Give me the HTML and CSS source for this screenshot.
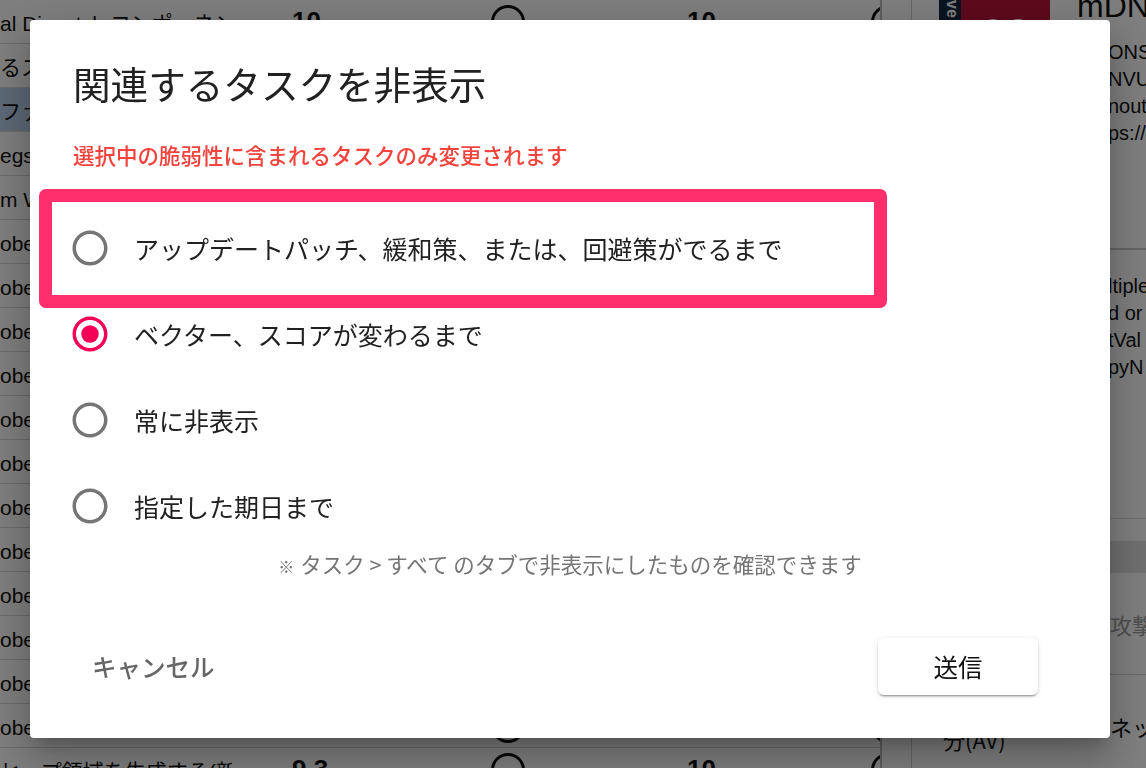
FILE: index.html
```html
<!DOCTYPE html>
<html lang="ja">
<head>
    <meta charset="UTF-8">
    <meta name="viewport" content="width=device-width, initial-scale=1.0">
    <title>関連するタスクを非表示</title>
    <link rel="stylesheet" href="styles.css">
</head>
<body>
    <div id="app">
        <div id="list">
            <div class="row"><div class="c-name">al Dispatch コンポーネントの脆弱性</div><div class="c-score">10</div><div class="c-mark"><div class="ring"></div></div><div class="c-avg">10</div><div class="c-mark"><div class="ring"></div></div></div>
            <div class="row"><div class="c-name">るスクリプト実行の脆弱性</div><div class="c-score">10</div><div class="c-mark"><div class="ring"></div></div><div class="c-avg">10</div><div class="c-mark"><div class="ring"></div></div></div>
            <div class="row selected"><div class="c-name">ファイル共有の脆弱性</div><div class="c-score">10</div><div class="c-mark"><div class="ring"></div></div><div class="c-avg">10</div><div class="c-mark"><div class="ring"></div></div></div>
            <div class="row"><div class="c-name">egsvr32 の脆弱性</div><div class="c-score">10</div><div class="c-mark"><div class="ring"></div></div><div class="c-avg">10</div><div class="c-mark"><div class="ring"></div></div></div>
            <div class="row"><div class="c-name">m Windows の脆弱性</div><div class="c-score">10</div><div class="c-mark"><div class="ring"></div></div><div class="c-avg">10</div><div class="c-mark"><div class="ring"></div></div></div>
            <div class="row"><div class="c-name">obe Reader の脆弱性</div><div class="c-score">10</div><div class="c-mark"><div class="ring"></div></div><div class="c-avg">10</div><div class="c-mark"><div class="ring"></div></div></div>
            <div class="row"><div class="c-name">obe Reader の脆弱性</div><div class="c-score">10</div><div class="c-mark"><div class="ring"></div></div><div class="c-avg">10</div><div class="c-mark"><div class="ring"></div></div></div>
            <div class="row"><div class="c-name">obe Reader の脆弱性</div><div class="c-score">10</div><div class="c-mark"><div class="ring"></div></div><div class="c-avg">10</div><div class="c-mark"><div class="ring"></div></div></div>
            <div class="row"><div class="c-name">obe Reader の脆弱性</div><div class="c-score">10</div><div class="c-mark"><div class="ring"></div></div><div class="c-avg">10</div><div class="c-mark"><div class="ring"></div></div></div>
            <div class="row"><div class="c-name">obe Reader の脆弱性</div><div class="c-score">10</div><div class="c-mark"><div class="ring"></div></div><div class="c-avg">10</div><div class="c-mark"><div class="ring"></div></div></div>
            <div class="row"><div class="c-name">obe Reader の脆弱性</div><div class="c-score">10</div><div class="c-mark"><div class="ring"></div></div><div class="c-avg">10</div><div class="c-mark"><div class="ring"></div></div></div>
            <div class="row"><div class="c-name">obe Reader の脆弱性</div><div class="c-score">10</div><div class="c-mark"><div class="ring"></div></div><div class="c-avg">10</div><div class="c-mark"><div class="ring"></div></div></div>
            <div class="row"><div class="c-name">obe Reader の脆弱性</div><div class="c-score">10</div><div class="c-mark"><div class="ring"></div></div><div class="c-avg">10</div><div class="c-mark"><div class="ring"></div></div></div>
            <div class="row"><div class="c-name">obe Reader の脆弱性</div><div class="c-score">10</div><div class="c-mark"><div class="ring"></div></div><div class="c-avg">10</div><div class="c-mark"><div class="ring"></div></div></div>
            <div class="row"><div class="c-name">obe Reader の脆弱性</div><div class="c-score">10</div><div class="c-mark"><div class="ring"></div></div><div class="c-avg">10</div><div class="c-mark"><div class="ring"></div></div></div>
            <div class="row"><div class="c-name">obe Reader の脆弱性</div><div class="c-score">10</div><div class="c-mark"><div class="ring"></div></div><div class="c-avg">10</div><div class="c-mark"><div class="ring"></div></div></div>
            <div class="row"><div class="c-name">obe Reader の脆弱性</div><div class="c-score">10</div><div class="c-mark"><div class="ring"></div></div><div class="c-avg">10</div><div class="c-mark"><div class="ring"></div></div></div>
            <div class="row"><div class="c-name">ヒープ領域を生成する(新規)</div><div class="c-score">9.3</div><div class="c-mark"><div class="ring"></div></div><div class="c-avg">10</div><div class="c-mark"><div class="ring"></div></div></div>
        </div>

        <div id="gutter"></div>

        <div id="detail">
            <div class="detail-head">
                <div class="tag">ve</div>
                <div class="score">9.8</div>
                <div class="detail-title">mDNS</div>
            </div>
            <div class="detail-text first">
                <p>ONSE</p>
                <p>NVU</p>
                <p>nout</p>
                <p>ps://</p>
            </div>
            <div class="detail-text second">
                <p>ltiple</p>
                <p>d or</p>
                <p>tVal</p>
                <p>pyN</p>
            </div>
            <div class="metric-head"></div>
            <div class="metric">
                <div class="metric-label">攻撃コード</div>
                <div class="metric-value muted">攻撃コード</div>
            </div>
            <div class="metric">
                <div class="metric-label">攻撃元区<br>分(AV)</div>
                <div class="metric-value">ネットワーク</div>
            </div>
        </div>
    </div>

    <div id="backdrop"></div>

    <div id="dialog">
        <div id="title">関連するタスクを非表示</div>
        <div id="notice">選択中の脆弱性に含まれるタスクのみ変更されます</div>

        <div id="options">
            <label class="option">
                <svg class="radio" viewBox="0 0 24 24"><path d="M12 2C6.48 2 2 6.48 2 12s4.48 10 10 10 10-4.48 10-10S17.52 2 12 2zm0 18c-4.42 0-8-3.58-8-8s3.58-8 8-8 8 3.58 8 8-3.58 8-8 8z"/></svg>
                <span>アップデートパッチ、緩和策、または、回避策がでるまで</span>
            </label>
            <label class="option checked">
                <svg class="radio" viewBox="0 0 24 24"><path d="M12 2C6.48 2 2 6.48 2 12s4.48 10 10 10 10-4.48 10-10S17.52 2 12 2zm0 18c-4.42 0-8-3.58-8-8s3.58-8 8-8 8 3.58 8 8-3.58 8-8 8z"/><circle cx="12" cy="12" r="5"/></svg>
                <span>ベクター、スコアが変わるまで</span>
            </label>
            <label class="option">
                <svg class="radio" viewBox="0 0 24 24"><path d="M12 2C6.48 2 2 6.48 2 12s4.48 10 10 10 10-4.48 10-10S17.52 2 12 2zm0 18c-4.42 0-8-3.58-8-8s3.58-8 8-8 8 3.58 8 8-3.58 8-8 8z"/></svg>
                <span>常に非表示</span>
            </label>
            <label class="option">
                <svg class="radio" viewBox="0 0 24 24"><path d="M12 2C6.48 2 2 6.48 2 12s4.48 10 10 10 10-4.48 10-10S17.52 2 12 2zm0 18c-4.42 0-8-3.58-8-8s3.58-8 8-8 8 3.58 8 8-3.58 8-8 8z"/></svg>
                <span>指定した期日まで</span>
            </label>
        </div>

        <div id="hint"><span class="mark">※</span>タスク &gt; すべて のタブで非表示にしたものを確認できます</div>

        <div id="actions">
            <button id="cancelBtn">キャンセル</button>
            <button id="sendBtn">送信</button>
        </div>

        <div id="highlight"></div>
    </div>
</body>
</html>
```

FILE: styles.css
```css
*{
    margin: 0;
    padding: 0;
    box-sizing: border-box;
}

body{
    width: 1146px;
    height: 768px;
    overflow: hidden;
    background-color: #ffffff;
    font-family: "Liberation Sans", "Noto Sans CJK JP", sans-serif;
    color: #111111;
}

/* 背景の画面 */
#app{
    display: flex;
    height: 768px;
    overflow: hidden;
}

#list{
    width: 882px;
    flex-shrink: 0;
    overflow: hidden;
    border-right: 2px solid #bdbdbd;
}

.row{
    display: flex;
    align-items: center;
    height: 44px;
    border-bottom: 1px solid #d6d6d6;
    white-space: nowrap;
}

.row.selected{
    background-color: #bcd2ee;
}

.c-name{
    width: 232px;
    margin-right: 60px;
    flex-shrink: 0;
    overflow: hidden;
    font-size: 21px;
}

.c-score, .c-avg{
    flex-shrink: 0;
    font-size: 26px;
    font-weight: 700;
}

.c-score{
    width: 198px;
}

.c-avg{
    width: 183px;
    margin-left: 161px;
}

.c-mark{
    width: 36px;
    flex-shrink: 0;
    display: flex;
    justify-content: center;
}

.ring{
    width: 34px;
    height: 34px;
    border: 3px solid #111111;
    border-radius: 50%;
}

#gutter{
    width: 30px;
    flex-shrink: 0;
    border-right: 1px solid #cfcfcf;
}

#detail{
    flex: 1;
    display: flex;
    flex-direction: column;
    overflow: hidden;
}

.detail-head{
    display: flex;
    height: 60px;
    margin-top: -40px;
    padding-left: 27px;
    flex-shrink: 0;
}

.tag{
    width: 22px;
    flex-shrink: 0;
    background-color: #142840;
    color: #ffffff;
    font-weight: 700;
    font-size: 16px;
    writing-mode: vertical-rl;
    padding-top: 40px;
}

.score{
    width: 89px;
    flex-shrink: 0;
    background-color: #bc1438;
    color: #ffffff;
    font-size: 30px;
    font-weight: 700;
    text-align: center;
    padding-top: 52px;
}

.detail-title{
    flex-shrink: 0;
    font-size: 32px;
    padding-left: 27px;
    padding-top: 26px;
    line-height: 40px;
}

.detail-text{
    padding-left: 196px;
    font-size: 20px;
    line-height: 27px;
    flex-shrink: 0;
    white-space: nowrap;
}

.detail-text.first{
    height: 230px;
    padding-top: 19px;
    border-bottom: 2px solid #c8c8c8;
}

.detail-text.second{
    height: 269px;
    padding-top: 23px;
    border-bottom: 1px solid #e2e2e2;
}

.metric-head{
    height: 32px;
    margin-top: 22px;
    background-color: #e0e0e0;
    flex-shrink: 0;
}

.metric{
    display: flex;
    align-items: center;
    height: 102px;
    border-bottom: 1px solid #d6d6d6;
    flex-shrink: 0;
    white-space: nowrap;
}

.metric-label{
    width: 198px;
    flex-shrink: 0;
    padding-left: 31px;
    font-size: 22px;
    line-height: 26px;
    font-family: "Noto Sans CJK JP", sans-serif;
}

.metric-value{
    flex-shrink: 0;
    font-size: 22px;
    font-family: "Noto Sans CJK JP", sans-serif;
}

.metric-value.muted{
    color: #9e9e9e;
}

/* ダイアログ */
#backdrop{
    position: fixed;
    top: 0;
    left: 0;
    right: 0;
    bottom: 0;
    background-color: rgba(0, 0, 0, 0.5);
}

#dialog{
    position: absolute;
    left: 30px;
    top: 20px;
    width: 1080px;
    height: 718px;
    background-color: #ffffff;
    border-radius: 4px;
    box-shadow: 0px 11px 15px -7px rgba(0,0,0,0.2), 0px 24px 38px 3px rgba(0,0,0,0.14), 0px 9px 46px 8px rgba(0,0,0,0.12);
    font-family: "Noto Sans CJK JP", sans-serif;
    color: #212121;
}

#title{
    margin-top: 41px;
    padding-left: 43px;
    font-size: 37.6px;
    line-height: 44px;
}

#notice{
    margin-top: 35px;
    padding-left: 43px;
    font-size: 21.5px;
    line-height: 30px;
    font-weight: 500;
    color: #f4433c;
}

#options{
    margin-top: 35px;
    padding-left: 39px;
}

.option{
    display: flex;
    align-items: center;
    height: 86px;
    font-size: 25px;
    cursor: pointer;
}

.radio{
    width: 42px;
    height: 42px;
    margin-right: 23px;
    fill: #757575;
}

.option.checked .radio{
    fill: #f50057;
}

#hint{
    text-align: center;
    font-size: 21.5px;
    line-height: 30px;
    color: #757575;
}

#hint .mark{
    font-size: 16px;
    margin-right: 6px;
}

#actions{
    display: flex;
    justify-content: space-between;
    align-items: center;
    margin-top: 57px;
    padding: 0 72px 0 62px;
}

#actions button{
    font-family: "Noto Sans CJK JP", sans-serif;
    font-size: 24.5px;
    border: none;
    background-color: #ffffff;
    cursor: pointer;
}

#cancelBtn{
    color: #666666;
    font-weight: 500;
}

#sendBtn{
    width: 160px;
    height: 57px;
    border-radius: 6px;
    color: #111111;
    box-shadow: 0px 3px 1px -2px rgba(0,0,0,0.2), 0px 2px 2px 0px rgba(0,0,0,0.14), 0px 1px 5px 0px rgba(0,0,0,0.12);
}

/* 注目枠 */
#highlight{
    position: absolute;
    left: 9px;
    top: 169px;
    width: 848px;
    height: 119px;
    border: 13px solid #ff2f6e;
    border-radius: 7px;
    pointer-events: none;
}
```
